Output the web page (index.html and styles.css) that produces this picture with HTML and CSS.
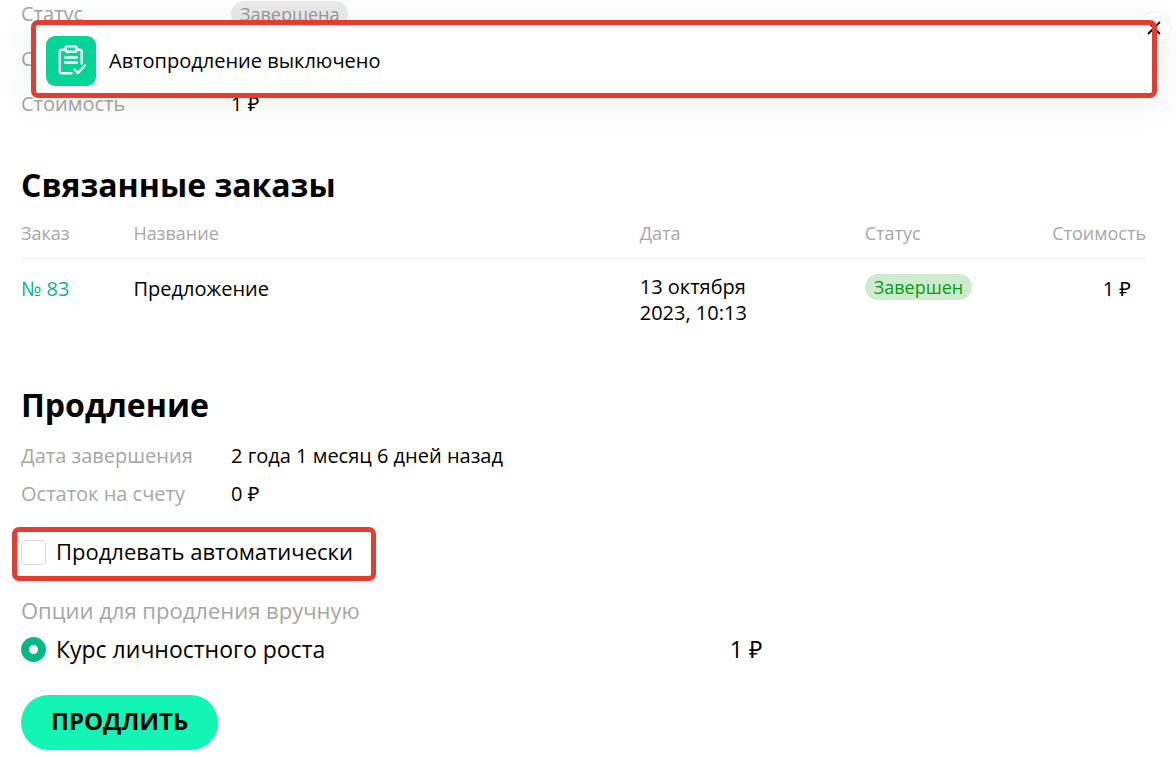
FILE: index.html
```html
<!DOCTYPE html>
<html lang="ru">
<head>
<meta charset="utf-8">
<meta name="viewport" content="width=device-width, initial-scale=1">
<title>Продление</title>
<link rel="stylesheet" href="styles.css">
</head>
<body>
<main class="page">
  <dl class="details details-summary">
    <dt>Статус</dt><dd><span class="badge badge-muted">Завершена</span></dd>
    <dt>С</dt><dd></dd>
    <dt>Стоимость</dt><dd>1 ₽</dd>
  </dl>

  <section class="orders">
    <h2 class="title">Связанные заказы</h2>
    <table class="table">
      <thead>
        <tr><th class="col-order">Заказ</th><th class="col-name">Название</th><th class="col-date">Дата</th><th class="col-status">Статус</th><th class="col-cost">Стоимость</th></tr>
      </thead>
      <tbody>
        <tr>
          <td class="low"><a class="link" href="#order-83">№ 83</a></td>
          <td class="low">Предложение</td>
          <td>13 октября<br>2023, 10:13</td>
          <td><span class="badge badge-done">Завершен</span></td>
          <td class="low cost">1 ₽</td>
        </tr>
      </tbody>
    </table>
  </section>

  <section class="renewal">
    <h2 class="title">Продление</h2>
    <dl class="details details-renewal">
      <dt>Дата завершения</dt><dd>2 года 1 месяц 6 дней назад</dd>
      <dt>Остаток на счету</dt><dd>0 ₽</dd>
    </dl>
    <form class="form">
      <div class="auto">
        <input class="check" type="checkbox" id="auto">
        <label class="auto-label" for="auto">Продлевать автоматически</label>
        <span class="frame frame-auto"></span>
      </div>
      <fieldset class="options">
        <legend class="legend">Опции для продления вручную</legend>
        <label class="option">
          <span class="option-name"><input class="radio" type="radio" name="offer" checked><span>Курс личностного роста</span></span>
          <span>1 ₽</span>
        </label>
      </fieldset>
      <button class="submit" type="button">ПРОДЛИТЬ</button>
    </form>
  </section>
</main>

<aside class="toast" role="status">
  <span class="toast-icon">
    <svg width="50" height="50" viewBox="0 0 50 50" fill="none" stroke="#fff" stroke-width="2.400" stroke-linecap="round" stroke-linejoin="round">
      <path d="M19.500 13.800H16q-2.200 0-2.200 2.200v19q0 2.200 2.200 2.200h9.500M30.500 13.800H33.500q2.200 0 2.200 2.200v11.500"/>
      <path d="M19.600 12.200q0-1.800 1.800-1.800h7.400q1.800 0 1.800 1.800v1.800q0 1.800-1.800 1.800h-7.400q-1.800 0-1.800-1.800z"/>
      <path d="M19.200 21.500h11.600M19.200 26.500h11.600M28.500 33.500l3.500 3.500 7-7.500"/>
    </svg>
  </span>
  <span class="toast-text">Автопродление выключено</span>
  <button class="close" type="button" aria-label="Закрыть">
    <svg width="14" height="14" viewBox="0 0 14 14" stroke="#000" stroke-width="1.800" stroke-linecap="round"><path d="M1.500 1.500l11 11M12.500 1.500l-11 11"/></svg>
  </button>
  <span class="frame frame-toast"></span>
</aside>
</body>
</html>
```
FILE: styles.css
```css
* { box-sizing: border-box; }
body {
  margin: 0;
  background: #fff;
  color: #000;
  font: 20px/28px "Open Sans", "Noto Sans", sans-serif;
}
.page { padding: 0 30px 7px 21px; }
.details {
  display: grid;
  grid-template-columns: 210px 1fr;
  margin: 0;
}
.details dt { color: #a6a6a6; }
.details dd { margin: 0; min-height: 28px; }
.details-summary { row-gap: 17px; }
.details-renewal { row-gap: 10px; }
.title { margin: 0; font-size: 32px; line-height: 42px; font-weight: 700; }
.orders { padding-top: 46px; }
.orders .title { margin-bottom: 2px; }
.renewal { padding-top: 58px; }
.renewal .title { margin-bottom: 16px; }
.badge {
  display: inline-block;
  height: 26px;
  padding: 0 9px;
  border-radius: 13px;
  font-size: 18px;
  line-height: 26px;
  vertical-align: top;
}
.badge-muted { margin-top: 1px; background: #ebebeb; color: #999; }
.badge-done { background: #cdebcf; color: #0c9a12; }
.table {
  width: 100%;
  border-collapse: collapse;
  table-layout: fixed;
  line-height: 26px;
}
.table th {
  padding: 12px 0;
  border-bottom: 1px solid #f0f0f0;
  color: #a6a6a6;
  font-size: 18px;
  font-weight: 400;
  text-align: left;
}
.table td { padding: 15px 0 0; vertical-align: top; }
.table td.low { padding-top: 17px; }
.table td.cost { padding-right: 15px; text-align: right; }
.table th.col-cost { text-align: right; }
.col-order { width: 10%; }
.col-name { width: 45%; }
.col-date { width: 20%; }
.link { color: #0cb582; text-decoration: none; }
.form { font-size: 22px; }
.auto {
  position: relative;
  display: flex;
  align-items: center;
  gap: 10px;
  width: fit-content;
  margin-top: 30px;
}
.check {
  appearance: none;
  width: 25px;
  height: 25px;
  margin: 0;
  border: 1px solid #dcdcdc;
  border-radius: 4px;
  background: #fff;
}
.auto-label { padding-bottom: 1px; line-height: 27px; }
.options { margin: 0; padding: 30px 0 0; border: 0; }
.legend { float: left; width: 100%; padding: 0; color: #a6a6a6; }
.option {
  clear: both;
  display: grid;
  grid-template-columns: 63% 1fr;
  padding-top: 11px;
  font-size: 23px;
}
.option-name { display: flex; align-items: center; gap: 10px; }
.radio {
  appearance: none;
  width: 25px;
  height: 25px;
  margin: 0;
  border: 8px solid #05b783;
  border-radius: 50%;
  background: #fff;
}
.submit {
  display: block;
  height: 55px;
  margin-top: 32px;
  padding: 0 30px 3px;
  border: 0;
  border-radius: 28px;
  background: #13f5b2;
  color: #000;
  font: 700 24px/28px "Open Sans", "Noto Sans", sans-serif;
}
.toast {
  position: absolute;
  top: 22px;
  left: 33px;
  right: 17px;
  display: flex;
  align-items: center;
  gap: 13px;
  padding: 14px 13px 10px;
  border-radius: 8px;
  background: #fff;
  box-shadow: 0 4px 36px rgba(20, 50, 40, 0.1);
}
.toast-icon {
  width: 50px;
  height: 50px;
  border-radius: 9px;
  background: #04d496;
}
.toast-icon svg, .close svg { display: block; }
.close {
  position: absolute;
  top: -9px;
  right: -10px;
  display: grid;
  place-items: center;
  width: 30px;
  height: 30px;
  padding: 0;
  border: 0;
  border-radius: 50%;
  background: #fff;
  box-shadow: 0 0 5px rgba(0, 0, 0, 0.06);
}
.frame {
  position: absolute;
  border: 5px solid #e53c31;
  border-radius: 7px;
  pointer-events: none;
}
.frame-toast { top: -2px; right: 2px; bottom: -2px; left: -2px; }
.frame-auto { top: -11px; right: -23px; bottom: -15px; left: -9px; }
```
